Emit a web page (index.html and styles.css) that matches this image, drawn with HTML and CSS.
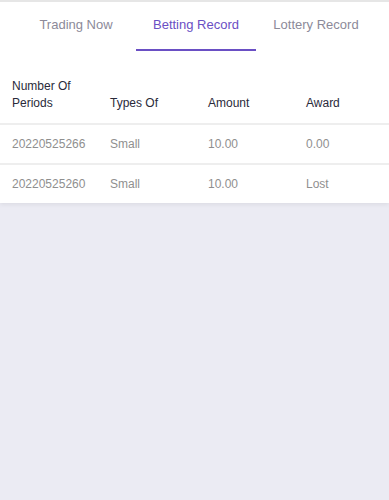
FILE: index.html
```html
<!DOCTYPE html>
<html lang="en">

<head>
    <meta charset="UTF-8">
    <meta name="viewport" content="width=device-width, initial-scale=1.0">
    <title>Betting Record</title>
    <link rel="stylesheet" href="styles.css">
</head>

<body>
    <div class="panel">
        <div class="tabs">
            <div class="tab">Trading Now</div>
            <div class="tab active">Betting Record</div>
            <div class="tab">Lottery Record</div>
        </div>
        <div class="table">
            <div class="row head">
                <div class="cell">Number Of Periods</div>
                <div class="cell">Types Of</div>
                <div class="cell">Amount</div>
                <div class="cell">Award</div>
            </div>
            <div class="row">
                <div class="cell">20220525266</div>
                <div class="cell">Small</div>
                <div class="cell">10.00</div>
                <div class="cell">0.00</div>
            </div>
            <div class="row last">
                <div class="cell">20220525260</div>
                <div class="cell">Small</div>
                <div class="cell">10.00</div>
                <div class="cell">Lost</div>
            </div>
        </div>
    </div>
</body>

</html>
```

FILE: styles.css
```css
body {
    margin: 0;
    background: #ebebf3;
    font-family: "Liberation Sans", Arial, sans-serif;
    height: 500px;
}

.panel {
    background: #fff;
    border-top: 2px solid #e6e6e6;
    box-shadow: 0 2px 4px rgba(0, 0, 0, 0.06);
}

.tabs {
    display: flex;
    padding-left: 16px;
}

.tab {
    width: 120px;
    height: 47px;
    line-height: 45px;
    text-align: center;
    font-size: 13px;
    color: #8c8a99;
    border-bottom: 2px solid transparent;
}

.tab.active {
    color: #6a4fc4;
    border-bottom-color: #6a4fc4;
}

.row {
    display: grid;
    grid-template-columns: 98px 98px 98px 1fr;
    padding-left: 12px;
    font-size: 12px;
    color: #8f8f8f;
    height: 38px;
    align-items: center;
    border-bottom: 2px solid #eeeeee;
}

.row.head {
    height: auto;
    padding-top: 27px;
    padding-bottom: 11px;
    align-items: end;
    color: #2a2a3a;
    line-height: 17px;
}

.row.head .cell:first-child {
    width: 66px;
}

.row.last {
    border-bottom: none;
    height: 38px;
}
```
